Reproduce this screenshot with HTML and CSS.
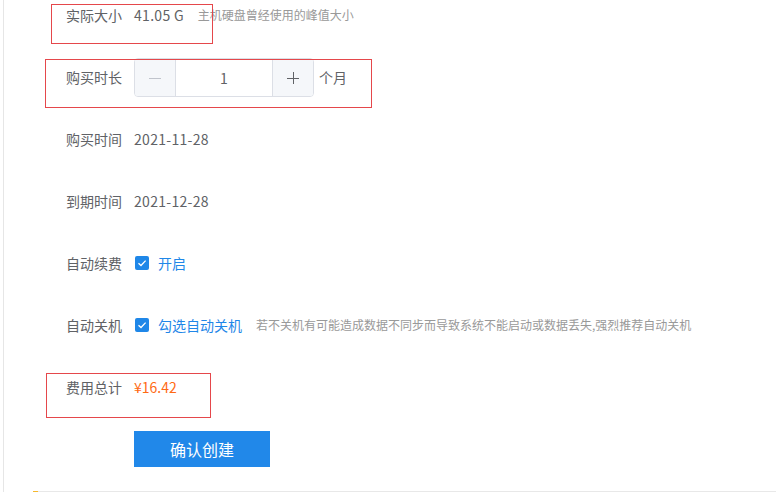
FILE: index.html
```html
<!DOCTYPE html>
<html lang="zh-CN">
<head>
    <meta charset="UTF-8">
    <meta name="viewport" content="width=device-width, initial-scale=1.0">
    <title>确认创建</title>
    <link rel="stylesheet" href="styles.css">
</head>
<body>
<div class="page">
    <form class="order-form">
        <div class="form-item">
            <label class="form-label">实际大小</label>
            <div class="form-content">
                <span class="value">41.05 G</span>
                <span class="hint">主机硬盘曾经使用的峰值大小</span>
            </div>
            <div class="mark mark-size"></div>
        </div>

        <div class="form-item">
            <label class="form-label">购买时长</label>
            <div class="form-content">
                <div class="input-number">
                    <span class="step step-minus">
                        <svg width="12" height="12" viewBox="0 0 12 12"><path d="M0 6.5 H12" stroke="#c0c4cc" stroke-width="1"/></svg>
                    </span>
                    <input type="text" value="1" />
                    <span class="step step-plus">
                        <svg width="12" height="12" viewBox="0 0 12 12"><path d="M0 6.5 H12 M6.5 0 V12" stroke="#606266" stroke-width="1"/></svg>
                    </span>
                </div>
                <span class="unit">个月</span>
            </div>
            <div class="mark mark-duration"></div>
        </div>

        <div class="form-item">
            <label class="form-label">购买时间</label>
            <div class="form-content">
                <span class="value">2021-11-28</span>
            </div>
        </div>

        <div class="form-item">
            <label class="form-label">到期时间</label>
            <div class="form-content">
                <span class="value">2021-12-28</span>
            </div>
        </div>

        <div class="form-item">
            <label class="form-label">自动续费</label>
            <div class="form-content">
                <span class="checkbox">
                    <svg width="10" height="8" viewBox="0 0 10 8"><path d="M1.5 4.2 L4 6.5 L8.6 1.6" fill="none" stroke="#fff" stroke-width="1.3"/></svg>
                </span>
                <span class="check-label">开启</span>
            </div>
        </div>

        <div class="form-item">
            <label class="form-label">自动关机</label>
            <div class="form-content">
                <span class="checkbox">
                    <svg width="10" height="8" viewBox="0 0 10 8"><path d="M1.5 4.2 L4 6.5 L8.6 1.6" fill="none" stroke="#fff" stroke-width="1.3"/></svg>
                </span>
                <span class="check-label">勾选自动关机</span>
                <span class="hint">若不关机有可能造成数据不同步而导致系统不能启动或数据丢失,强烈推荐自动关机</span>
            </div>
        </div>

        <div class="form-item">
            <label class="form-label">费用总计</label>
            <div class="form-content">
                <span class="price">¥16.42</span>
            </div>
            <div class="mark mark-price"></div>
        </div>

        <div class="form-item">
            <div class="form-content offset">
                <button type="button" class="btn-primary">确认创建</button>
            </div>
        </div>
    </form>
    <div class="footer-line"><span class="accent"></span></div>
</div>
</body>
</html>
```

FILE: styles.css
```css
body {
    margin: 0;
    font-family: "Noto Sans CJK SC", "Microsoft YaHei", sans-serif;
    font-size: 14px;
    color: #606266;
    background: #fff;
    overflow: hidden;
}
.page {
    margin-left: 3px;
    border-left: 1px solid #e6e6e6;
    min-height: 493px;
}
.order-form {
    margin-top: -5px;
}
.form-item {
    position: relative;
    display: flex;
    height: 40px;
    margin-bottom: 22px;
}
.form-label {
    width: 130px;
    padding-right: 12px;
    box-sizing: border-box;
    text-align: right;
    line-height: 40px;
    color: #606266;
}
.form-content {
    display: flex;
    align-items: center;
    line-height: 40px;
}
.form-content.offset {
    margin-left: 130px;
}
.value {
    color: #606266;
    letter-spacing: 0.3px;
}
.hint {
    margin-left: 14px;
    font-size: 12px;
    color: #999;
}
.input-number {
    display: flex;
    width: 180px;
    height: 39px;
    margin-top: 1px;
    border: 1px solid #dcdfe6;
    border-radius: 4px;
    box-sizing: border-box;
    overflow: hidden;
}
.step {
    display: flex;
    align-items: center;
    justify-content: center;
    width: 40px;
    background: #f5f7fa;
}
.step-minus {
    border-right: 1px solid #dcdfe6;
}
.step-plus {
    border-left: 1px solid #dcdfe6;
}
.input-number input {
    flex: 1;
    width: 0;
    border: none;
    outline: none;
    text-align: center;
    font-family: inherit;
    font-size: 14px;
    color: #606266;
    padding: 0;
}
.unit {
    margin-left: 5px;
}
.checkbox {
    display: inline-flex;
    align-items: center;
    justify-content: center;
    width: 14px;
    height: 14px;
    border-radius: 2px;
    background: #1f87e8;
    margin-left: 1px;
}
.check-label {
    margin-left: 9px;
    color: #1f87e8;
}
.price {
    color: #ff6a13;
}
.btn-primary {
    width: 136px;
    height: 36px;
    border: none;
    background: #2188e9;
    color: #fff;
    font-family: inherit;
    font-size: 16px;
    cursor: pointer;
}
.mark {
    position: absolute;
    border: 1px solid #e5474b;
    box-sizing: border-box;
}
.mark-size {
    left: 47px;
    top: 9px;
    width: 162px;
    height: 40px;
}
.mark-duration {
    left: 41px;
    top: 2px;
    width: 327px;
    height: 49px;
}
.mark-price {
    left: 42px;
    top: 6px;
    width: 165px;
    height: 45px;
}
.footer-line {
    margin-left: 29px;
    margin-top: 1px;
    height: 0;
    border-top: 1px solid #e8e8e8;
    position: relative;
}
.accent {
    position: absolute;
    left: 0;
    top: -1px;
    width: 5px;
    height: 1px;
    background: #f5b82e;
}
```
